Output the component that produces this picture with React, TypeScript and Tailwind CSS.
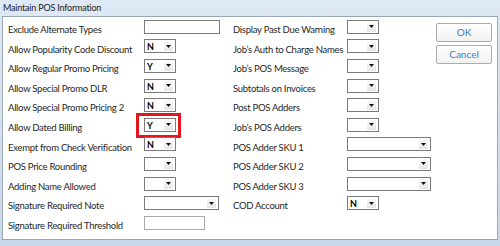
import React from 'react';

type Ctl =
  | { kind: 'combo'; value?: string; wide?: boolean; mid?: boolean; highlight?: boolean }
  | { kind: 'text'; width: number; light?: boolean };

type Row = { label: string; ctl: Ctl };

const leftRows: Row[] = [
  { label: 'Exclude Alternate Types', ctl: { kind: 'text', width: 76 } },
  { label: 'Allow Popularity Code Discount', ctl: { kind: 'combo', value: 'N' } },
  { label: 'Allow Regular Promo Pricing', ctl: { kind: 'combo', value: 'Y' } },
  { label: 'Allow Special Promo DLR', ctl: { kind: 'combo', value: 'N' } },
  { label: 'Allow Special Promo Pricing 2', ctl: { kind: 'combo', value: 'N' } },
  { label: 'Allow Dated Billing', ctl: { kind: 'combo', value: 'Y', highlight: true } },
  { label: 'Exempt from Check Verification', ctl: { kind: 'combo', value: 'N' } },
  { label: 'POS Price Rounding', ctl: { kind: 'combo' } },
  { label: 'Adding Name Allowed', ctl: { kind: 'combo' } },
  { label: 'Signature Required Note', ctl: { kind: 'combo', mid: true } },
  { label: 'Signature Required Threshold', ctl: { kind: 'text', width: 61, light: true } },
];

const rightRows: Row[] = [
  { label: 'Display Past Due Warning', ctl: { kind: 'combo' } },
  { label: 'Job’s Auth to Charge Names', ctl: { kind: 'combo' } },
  { label: 'Job’s POS Message', ctl: { kind: 'combo' } },
  { label: 'Subtotals on Invoices', ctl: { kind: 'combo' } },
  { label: 'Post POS Adders', ctl: { kind: 'combo' } },
  { label: 'Job’s POS Adders', ctl: { kind: 'combo' } },
  { label: 'POS Adder SKU 1', ctl: { kind: 'combo', wide: true } },
  { label: 'POS Adder SKU 2', ctl: { kind: 'combo', wide: true } },
  { label: 'POS Adder SKU 3', ctl: { kind: 'combo', wide: true } },
  { label: 'COD Account', ctl: { kind: 'combo', value: 'N' } },
];

function Arrow() {
  return (
    <span className="flex h-[10px] w-[9px] items-center justify-center bg-gradient-to-b from-[#fbfbfb] to-[#e6e6e6]">
      <svg width="5" height="3" viewBox="0 0 5 3">
        <path d="M0 0 H5 L2.5 3 Z" fill="#111" />
      </svg>
    </span>
  );
}

function Control({ ctl }: { ctl: Ctl }) {
  if (ctl.kind === 'text') {
    return (
      <div
        className={`h-[14px] bg-white border ${ctl.light ? 'border-[#a9a9a9]' : 'border-[#7b7b7b]'}`}
        style={{ width: ctl.width }}
      />
    );
  }
  const w = ctl.wide ? 'w-[84px]' : ctl.mid ? 'w-[75px]' : 'w-[32px]';
  return (
    <div className={`relative ${w}`}>
      <div className="flex h-[14px] items-center justify-between border border-[#7b7b7b] bg-white pl-[2px] pr-[2px]">
        <span className="text-[9px] font-bold leading-[12px] pt-[2px] text-black">{ctl.value ?? ''}</span>
        <Arrow />
      </div>
      {ctl.highlight && (
        <div className="absolute -left-[8px] -right-[5px] -top-[5px] -bottom-[6px] border-[3px] border-[#e3161c]" />
      )}
    </div>
  );
}

function Column({ rows, labelWidth }: { rows: Row[]; labelWidth: string }) {
  return (
    <div className="flex flex-col">
      {rows.map((r) => (
        <div key={r.label} className="flex h-[19.6px] items-start">
          <span className={`${labelWidth} shrink-0 whitespace-nowrap pt-[6px] text-[9.5px] leading-[14px] tracking-[-0.27px] text-[#262626]`}>
            {r.label}
          </span>
          <div className="mt-[2.8px]">
            <Control ctl={r.ctl} />
          </div>
        </div>
      ))}
    </div>
  );
}

function Button({ children }: { children: React.ReactNode }) {
  return (
    <button className="flex h-[19px] w-[56px] items-center justify-center rounded-[2px] border border-[#acacac] bg-gradient-to-b from-white to-[#f1f1f1] text-[10px] text-[#3b79cc]">
      {children}
    </button>
  );
}

export default function App() {
  return (
    <div
      className="h-[246px] w-[500px] overflow-hidden bg-gradient-to-b from-[#dfe9f5] to-[#c9d8ea]"
      style={{ fontFamily: 'Lato, "Open Sans", sans-serif' }}
    >
      {/* Title bar */}
      <div className="flex h-[16px] items-center pl-[3px] text-[9px] tracking-[-0.2px] text-[#1b1b1b]">
        Maintain POS Information
      </div>

      {/* Dialog body */}
      <div className="mx-[2px] flex h-[224px] border border-[#9aa7b6] bg-white">
        <div className="w-[230px] pl-[5px]">
          <Column rows={leftRows} labelWidth="w-[136px]" />
        </div>
        <div className="w-[203px]">
          <Column rows={rightRows} labelWidth="w-[114px]" />
        </div>
        <div className="flex flex-col gap-[3px] pt-[6px]">
          <Button>OK</Button>
          <Button>Cancel</Button>
        </div>
      </div>
    </div>
  );
}
